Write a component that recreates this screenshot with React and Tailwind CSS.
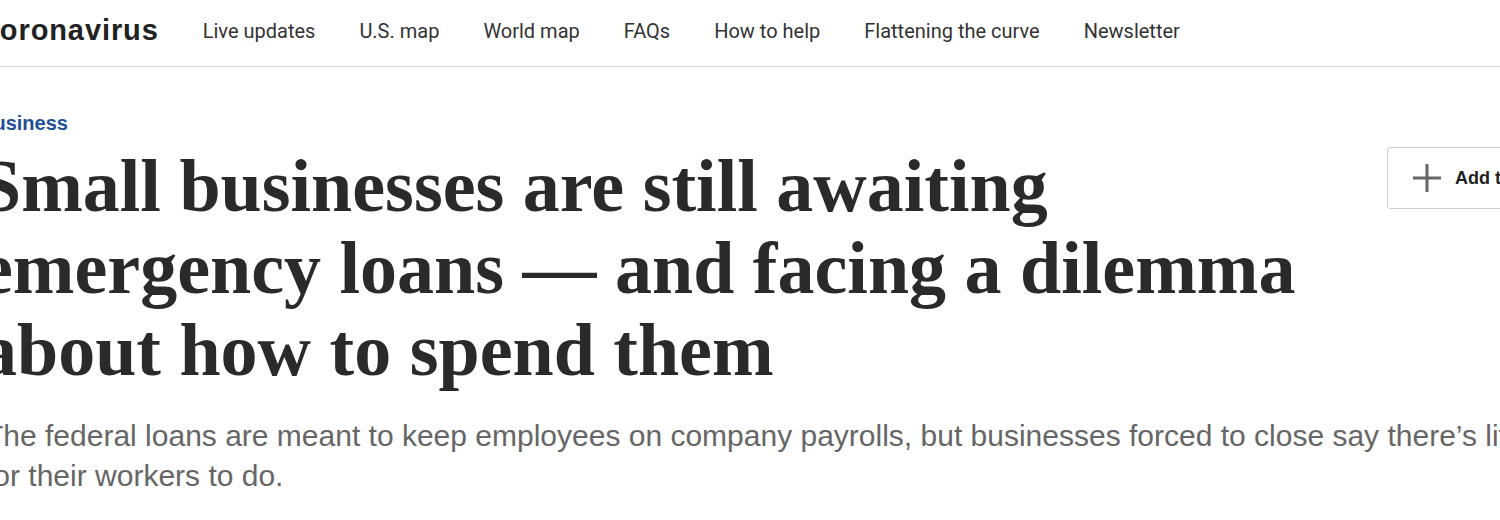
const navItems = ['Live updates', 'U.S. map', 'World map', 'FAQs', 'How to help', 'Flattening the curve', 'Newsletter'];

function PlusIcon() {
  return (
    <svg width="28" height="28" viewBox="0 0 28 28" fill="none" stroke="#666" strokeWidth="3">
      <path d="M14 0v28M0 14h28" />
    </svg>
  );
}

export default function App() {
  return (
    <div className="w-[1500px] h-[520px] overflow-hidden bg-white text-[#2a2a2a]">
      {/* Section nav */}
      <header className="h-[67px] border-b border-[#d5d5d5]">
        <nav className="ml-[-22px] flex h-full items-center gap-[44px] whitespace-nowrap pb-[4px]">
          <span className="text-[29px] font-bold tracking-[0.9px] text-[#222]" style={{ fontFamily: '"Liberation Sans", Arial, sans-serif' }}>
            Coronavirus
          </span>
          {navItems.map((item) => (
            <a key={item} href="#" className="text-[20px] text-[#333]" style={{ fontFamily: '"Roboto", sans-serif' }}>
              {item}
            </a>
          ))}
        </nav>
      </header>

      <main className="ml-[-20px]">
        <div className="pt-[44px] ml-[-1px] text-[20px] font-bold leading-[24px] text-[#1f4f98]" style={{ fontFamily: '"Liberation Sans", Arial, sans-serif' }}>
          Business
        </div>

        <div className="flex items-start">
          <h1
            className="w-[1407px] shrink-0 whitespace-nowrap pt-[10px] text-[74px] font-bold leading-[82px] text-[#2a2a2a]"
            style={{ fontFamily: '"Liberation Serif", "Times New Roman", serif' }}
          >
            Small businesses are still awaiting
            <br />
            emergency loans — and facing a dilemma
            <br />
            about how to spend them
          </h1>
          <button className="mt-[12px] flex h-[62px] shrink-0 items-center gap-[14px] rounded-[3px] border border-[#d0d0d0] bg-white pl-[25px] pr-[24px] whitespace-nowrap">
            <PlusIcon />
            <span className="text-[18px] font-bold text-[#222]" style={{ fontFamily: '"Liberation Sans", Arial, sans-serif' }}>
              Add to list
            </span>
          </button>
        </div>

        <p
          className="mt-[25px] ml-[5px] whitespace-nowrap text-[30px] leading-[40px] text-[#666]"
          style={{ fontFamily: '"Liberation Sans", Arial, sans-serif' }}
        >
          The federal loans are meant to keep employees on company payrolls, but businesses forced to close say there’s little
          <br />
          for their workers to do.
        </p>
      </main>
    </div>
  );
}
